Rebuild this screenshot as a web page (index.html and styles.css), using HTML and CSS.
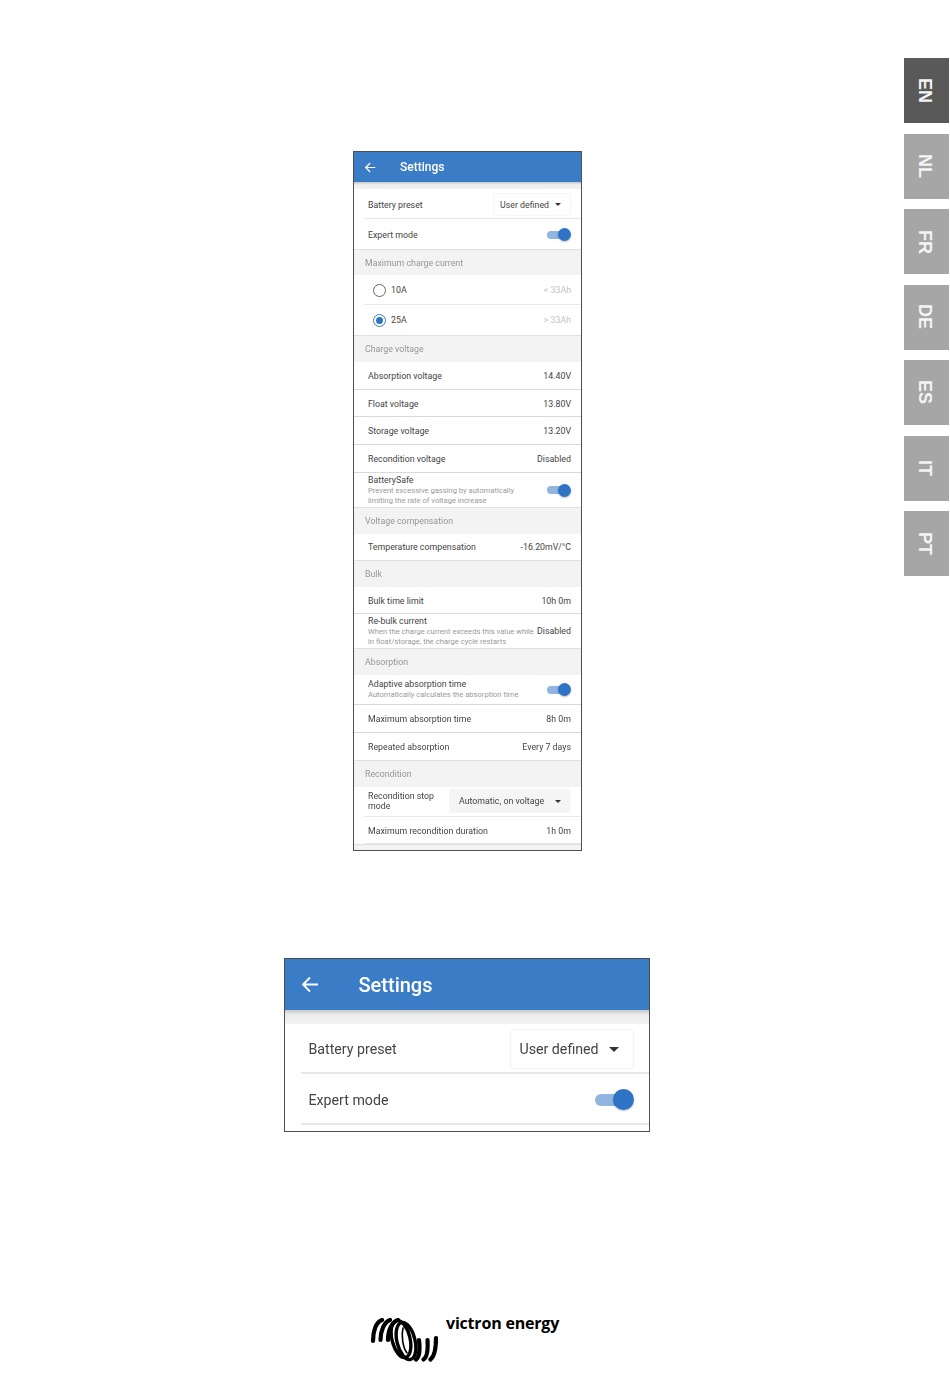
FILE: index.html
```html
<!DOCTYPE html>
<html lang="en">
<head>
<meta charset="utf-8">
<title>Settings</title>
<link rel="stylesheet" href="styles.css">
</head>
<body>
<nav class="tabs">
  <div class="tab active">EN</div>
  <div class="tab">NL</div>
  <div class="tab">FR</div>
  <div class="tab">DE</div>
  <div class="tab">ES</div>
  <div class="tab">IT</div>
  <div class="tab">PT</div>
</nav>
<main class="page">
  <section class="shot">
    <div class="soft">
      <header class="bar">
        <svg class="back" viewBox="4 4 17 16"><path d="M20 12H5M12 5l-7 7 7 7"/></svg>
        <span class="title">Settings</span>
      </header>
      <div class="shade"></div>
      <div class="row h30 line low"><span>Battery preset</span><span class="select"><span>User defined</span><i class="caret"></i></span></div>
      <div class="row h30 low"><span>Expert mode</span><span class="switch"><i></i></span></div>
      <div class="sect h26">Maximum charge current</div>
      <div class="row radio-row h30 line"><span class="radio"></span><span class="grow">10A</span><span class="muted">&lt; 33Ah</span></div>
      <div class="row radio-row h30"><span class="radio on"></span><span class="grow">25A</span><span class="muted">&gt; 33Ah</span></div>
      <div class="sect h27">Charge voltage</div>
      <div class="row h28 rule"><span>Absorption voltage</span><span>14.40V</span></div>
      <div class="row h27 rule low"><span>Float voltage</span><span>13.80V</span></div>
      <div class="row h28 rule"><span>Storage voltage</span><span>13.20V</span></div>
      <div class="row h28 rule"><span>Recondition voltage</span><span>Disabled</span></div>
      <div class="row h34"><div class="stack"><span>BatterySafe</span><small>Prevent excessive gassing by automatically<br>limiting the rate of voltage increase</small></div><span class="switch"><i></i></span></div>
      <div class="sect h27">Voltage compensation</div>
      <div class="row h26"><span>Temperature compensation</span><span>-16.20mV/°C</span></div>
      <div class="sect h27">Bulk</div>
      <div class="row h27 rule low"><span>Bulk time limit</span><span>10h 0m</span></div>
      <div class="row h34"><div class="stack"><span>Re-bulk current</span><small>When the charge current exceeds this value while<br>in float/storage, the charge cycle restarts</small></div><span class="tight">Disabled</span></div>
      <div class="sect h27">Absorption</div>
      <div class="row h30 rule"><div class="stack"><span>Adaptive absorption time</span><small>Automatically calculates the absorption time</small></div><span class="switch"><i></i></span></div>
      <div class="row h28 rule"><span>Maximum absorption time</span><span>8h 0m</span></div>
      <div class="row h27"><span>Repeated absorption</span><span>Every 7 days</span></div>
      <div class="sect h27">Recondition</div>
      <div class="row h30 line high"><span class="wrap">Recondition stop mode</span><span class="select filled"><span>Automatic, on voltage</span><i class="caret"></i></span></div>
      <div class="row h27 line"><span>Maximum recondition duration</span><span>1h 0m</span></div>
      <div class="sect tail"></div>
    </div>
  </section>

  <section class="shot large">
    <div class="soft">
      <header class="bar">
        <svg class="back" viewBox="4 4 17 16"><path d="M20 12H5M12 5l-7 7 7 7"/></svg>
        <span class="title">Settings</span>
      </header>
      <div class="shade"></div>
      <div class="row first line"><span>Battery preset</span><span class="select"><span>User defined</span><i class="caret"></i></span></div>
      <div class="row second line"><span>Expert mode</span><span class="switch"><i></i></span></div>
    </div>
  </section>

  <footer class="logo">
    <svg class="coil" viewBox="0 0 68 44">
      <g fill="none" stroke="#000" stroke-linecap="round">
        <path stroke-width="4.200" d="M3 23C3 13 6 4 12 2"/>
        <path stroke-width="4.200" d="M10.500 22C10.500 13 14 4 20 2"/>
        <path stroke-width="4.200" d="M18 22C18 12 22 4 28 2"/>
        <ellipse stroke-width="3.400" cx="31" cy="21" rx="9" ry="19" transform="rotate(-14 31 21)"/>
        <ellipse stroke-width="3.400" cx="36" cy="23" rx="9" ry="19" transform="rotate(-14 36 23)"/>
        <path stroke-width="1.600" d="M33 10C31 18 33 30 37 35"/>
        <path stroke-width="4.200" d="M46 41.500C49.500 39 50 30 49 22"/>
        <path stroke-width="4.200" d="M53.500 41.500C57.500 39 58 30 57.500 22"/>
        <path stroke-width="4.200" d="M60.500 41.500C65 38 66 30 66 20"/>
      </g>
    </svg>
    <span class="brand">victron energy</span>
  </footer>
</main>
</body>
</html>
```
FILE: styles.css
```css
* { box-sizing: border-box; }
html, body { margin: 0; background: #fff; }
body { height: 1387px; overflow: hidden; font-family: Roboto, "Liberation Sans", sans-serif; color: #444; }

.page {
  width: 935px;
  padding-top: 151px;
  display: flex;
  flex-direction: column;
  align-items: center;
}

.tabs {
  position: absolute;
  top: 58px;
  right: 1px;
  width: 45px;
  display: flex;
  flex-direction: column;
  gap: 10.500px;
}
.tab {
  height: 65px;
  padding-right: 4px;
  background: #a6a6a6;
  color: #f4f4f4;
  font: bold 18px "Liberation Sans", Arial, sans-serif;
  writing-mode: vertical-rl;
  display: flex;
  align-items: center;
  justify-content: center;
}
.tab.active { background: #595959; }

.shot {
  width: 229px;
  height: 700px;
  border: 1px solid #4a4f55;
  background: #fff;
  overflow: hidden;
  font-size: 8.800px;
}
.soft { filter: blur(0.4px); }

.bar {
  height: 30px;
  background: #3b7cc6;
  color: #fff;
  display: flex;
  align-items: center;
  padding-left: 11px;
}
.back { width: 11px; height: 11px; fill: none; stroke: #fff; stroke-width: 1.800; margin-right: 24px; }
.title { font-size: 12px; font-weight: 500; }
.shade { height: 7px; background: linear-gradient(#c4c6c8, #ececec 35%, #f3f3f3); }

.row {
  display: flex;
  align-items: center;
  justify-content: space-between;
  padding: 0 10px 0 14px;
  background: #fff;
  position: relative;
}
.rule { border-bottom: 1px solid #d9d9d9; }
.low { padding-top: 1px; }
.high { padding-bottom: 2px; }
.line::after {
  content: "";
  position: absolute;
  left: 10px;
  right: 0;
  bottom: 0;
  height: 1px;
  background: #e8e8e8;
}
.sect {
  display: flex;
  align-items: center;
  padding-left: 11px;
  background: #f3f3f3;
  color: #969696;
  border-top: 1px solid #e0e0e0;
}
.tail { height: 8px; }

.h26 { height: 26px; }
.h27 { height: 27px; }
.h28 { height: 28px; }
.h30 { height: 30px; }
.h34 { height: 34px; }

.stack { display: flex; flex-direction: column; }
.stack small { font-size: 7.600px; line-height: 9.500px; margin-top: 1px; color: #9a9a9a; white-space: nowrap; }
.stack span { line-height: 10px; }
.tight { margin-left: -30px; white-space: nowrap; }
.wrap { width: 76px; line-height: 10px; }

.select {
  display: flex;
  align-items: center;
  justify-content: space-between;
  border: 1px solid #f7f7f7;
  border-radius: 2px;
  height: 23px;
  width: 78px;
  padding: 0 9px 0 6px;
}
.select.filled { background: #f5f5f5; width: 122px; height: 24px; padding: 0 9px 0 9px; }
.caret { width: 0; height: 0; border: 3px solid transparent; border-top: 3.500px solid #333; border-bottom: 0; }

.switch { position: relative; width: 24px; height: 14px; }
.switch::before {
  content: "";
  position: absolute;
  left: 0;
  right: 2px;
  top: 3px;
  height: 8px;
  border-radius: 4px;
  background: #8fb5e0;
}
.switch i {
  position: absolute;
  right: 0;
  top: 0.500px;
  width: 13px;
  height: 13px;
  border-radius: 50%;
  background: #2f74c4;
  box-shadow: 0 1px 2px rgba(0, 0, 0, .25);
}

.radio-row { padding-left: 19px; justify-content: flex-start; }
.grow { flex: 1; }
.radio { width: 13px; height: 13px; border: 1px solid #666; border-radius: 50%; margin-right: 5px; }
.radio.on { border-color: #3b7cc6; position: relative; }
.radio.on::after {
  content: "";
  position: absolute;
  inset: 2px;
  border-radius: 50%;
  background: #2f74c4;
}
.muted { color: #c4c4c4; }

.large {
  width: 366px;
  height: 174px;
  margin-top: 107px;
  margin-right: 2px;
  font-size: 14.200px;
}
.large .soft { filter: blur(0.6px); }
.large .bar { height: 51px; padding-left: 17px; }
.large .back { width: 17px; height: 17px; margin-right: 40px; }
.large .title { font-size: 20px; }
.large .shade { height: 14px; }
.large .first { height: 50px; padding: 0 15px 0 24px; }
.large .second { height: 51px; padding: 0 15px 0 24px; }
.large .line::after { left: 16px; height: 2px; }
.large .select { width: 124px; height: 40px; border-color: #f4f4f4; border-radius: 3px; padding: 0 14px 0 9px; }
.large .caret { border-width: 5px; border-top-width: 5.500px; border-bottom-width: 0; }
.large .switch { width: 39px; height: 22px; }
.large .switch::before { top: 5px; height: 12px; border-radius: 6px; right: 3px; }
.large .switch i { width: 21px; height: 21px; top: .500px; }

.logo {
  margin-top: 186px;
  width: 190px;
  margin-left: -5px;
  display: flex;
  align-items: flex-start;
  gap: 8px;
}
.coil { width: 68px; height: 44px; flex: none; }
.brand {
  font: bold 16px/1 "Open Sans", sans-serif;
  color: #000;
  letter-spacing: -.2px;
  margin-top: -3px;
  white-space: nowrap;
}
```
